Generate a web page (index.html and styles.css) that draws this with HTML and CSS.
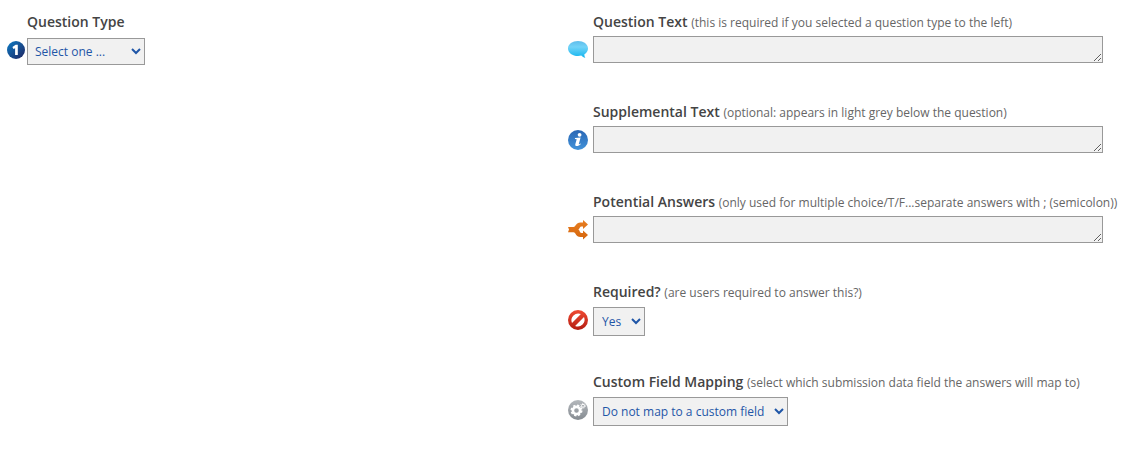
FILE: index.html
```html
<!DOCTYPE html>
<html lang="en">
<head>
  <meta charset="UTF-8" />
  <title>Custom Question</title>
  <meta name="viewport" content="width=device-width, initial-scale=1.0" />
  <link rel="stylesheet" href="styles.css">
</head>
<body>
  <form class="question-form">
    <!-- Left column: question type -->
    <div class="column">
      <div class="field type-field">
        <div class="field-label">
          <label for="questionType">Question Type</label>
        </div>
        <svg class="icon" viewBox="0 0 20 20" aria-hidden="true">
          <defs>
            <linearGradient id="navy" x1="0" y1="0" x2="1" y2="1">
              <stop offset="0" stop-color="#0c7cc6" />
              <stop offset="1" stop-color="#20235f" />
            </linearGradient>
          </defs>
          <circle cx="10" cy="10" r="10" fill="url(#navy)" />
          <path d="M6 6.600 L9.600 4.200 H12 V15.500 H9 V8 L7.200 9 Z" fill="#fff" />
        </svg>
        <select id="questionType">
          <option>Select one ...</option>
        </select>
      </div>
    </div>

    <!-- Right column: question details -->
    <div class="column">
      <div class="field">
        <div class="field-label">
          <label for="questionText">Question Text</label>
          <span class="hint">(this is required if you selected a question type to the left)</span>
        </div>
        <svg class="icon" viewBox="0 0 20 20" aria-hidden="true">
          <defs>
            <linearGradient id="sky" x1="0" y1="0" x2="0" y2="1">
              <stop offset="0" stop-color="#5fbdeb" />
              <stop offset="0.35" stop-color="#72d3f8" />
              <stop offset="1" stop-color="#0eb4ee" />
            </linearGradient>
          </defs>
          <path d="M10 1 C15.500 1 20 4.200 20 8.400 C20 10.900 18.600 12.900 16.400 14.300 C16.300 15.700 16.700 16.900 17.400 18.100 C15.700 17.700 14.300 16.800 13.300 15.600 C12.300 15.900 11.200 16 10 16 C4.500 16 0 12.600 0 8.400 C0 4.200 4.500 1 10 1 Z" fill="url(#sky)" />
        </svg>
        <textarea id="questionText" rows="1"></textarea>
      </div>

      <div class="field">
        <div class="field-label">
          <label for="supplementalText">Supplemental Text</label>
          <span class="hint">(optional: appears in light grey below the question)</span>
        </div>
        <svg class="icon" viewBox="0 0 20 20" aria-hidden="true">
          <defs>
            <linearGradient id="blue" x1="0" y1="0" x2="0" y2="1">
              <stop offset="0" stop-color="#2966b4" />
              <stop offset="1" stop-color="#4293da" />
            </linearGradient>
          </defs>
          <circle cx="10" cy="10" r="10" fill="url(#blue)" />
          <circle cx="11.600" cy="4.800" r="1.900" fill="#fff" />
          <path d="M7 8 L12.600 7.500 L10.800 14 Q10.800 14.800 12.300 13.400 L12.800 13.900 C10.800 16.300 6.800 17.200 7.300 14.300 L8.700 9.200 L6.900 8.900 Z" fill="#fff" />
        </svg>
        <textarea id="supplementalText" rows="1"></textarea>
      </div>

      <div class="field">
        <div class="field-label">
          <label for="potentialAnswers">Potential Answers</label>
          <span class="hint">(only used for multiple choice/T/F...separate answers with ; (semicolon))</span>
        </div>
        <svg class="icon" viewBox="0 0 20 20" aria-hidden="true">
          <defs>
            <linearGradient id="orange" x1="0" y1="0" x2="0" y2="1">
              <stop offset="0" stop-color="#e87f22" />
              <stop offset="1" stop-color="#d5650c" />
            </linearGradient>
          </defs>
          <path d="M0 7 H5.500 C8 7 7.500 2.500 12.500 2.500 H15 V0 L20 4.500 L15 9 V6.500 H13.500 C11.500 6.500 12 9 10.200 9.500 C12 10 11.500 13 13.500 13 H15 V10.500 L20 15 L15 19.500 V17 H12.500 C7.500 17 8 12.200 5.500 12.200 H0 L1 9.600 Z" fill="url(#orange)" />
        </svg>
        <textarea id="potentialAnswers" rows="1"></textarea>
      </div>

      <div class="field">
        <div class="field-label">
          <label for="required">Required?</label>
          <span class="hint">(are users required to answer this?)</span>
        </div>
        <svg class="icon" viewBox="0 0 20 20" aria-hidden="true">
          <defs>
            <linearGradient id="red" x1="0" y1="0" x2="0" y2="1">
              <stop offset="0" stop-color="#f04a32" />
              <stop offset="1" stop-color="#b31d12" />
            </linearGradient>
          </defs>
          <path fill="url(#red)" fill-rule="evenodd" d="M10 0 A10 10 0 1 1 10 20 A10 10 0 1 1 10 0 Z M12.900 4 A6.800 6.800 0 0 0 4 12.900 Z M16 7.100 A6.800 6.800 0 0 1 7.100 16 Z" />
        </svg>
        <select id="required" class="roomy">
          <option>Yes</option>
          <option>No</option>
        </select>
      </div>

      <div class="field">
        <div class="field-label">
          <label for="fieldMapping">Custom Field Mapping</label>
          <span class="hint">(select which submission data field the answers will map to)</span>
        </div>
        <svg class="icon" viewBox="0 0 20 20" aria-hidden="true">
          <defs>
            <linearGradient id="grey" x1="0" y1="0" x2="0" y2="1">
              <stop offset="0" stop-color="#b4b8bc" />
              <stop offset="1" stop-color="#858b91" />
            </linearGradient>
          </defs>
          <circle cx="10" cy="10" r="10" fill="url(#grey)" />
          <circle cx="8.500" cy="10.500" r="3.600" fill="none" stroke="#fff" stroke-width="2.600" />
          <circle cx="8.500" cy="10.500" r="5.200" fill="none" stroke="#fff" stroke-width="1.600" stroke-dasharray="2.200 1.884" />
          <circle cx="15" cy="5.800" r="1.500" fill="none" stroke="#fff" stroke-width="1" />
          <circle cx="15" cy="5.800" r="2.400" fill="none" stroke="#fff" stroke-width="0.900" stroke-dasharray="0.950 0.935" />
        </svg>
        <select id="fieldMapping" class="roomy">
          <option>Do not map to a custom field</option>
        </select>
      </div>
    </div>
  </form>
</body>
</html>
```

FILE: styles.css
```css
body {
  margin: 0;
  background: #fff;
  font-family: "Open Sans", "Noto Sans", sans-serif;
  font-size: 12px;
  color: #666;
}
.question-form {
  display: grid;
  grid-template-columns: 1fr 1fr;
  gap: 10px;
  padding: 12px 8px 0 7px;
}
/* Icon on the left, label above the control on the right */
.field {
  display: grid;
  grid-template-columns: 20px 1fr;
  grid-template-rows: 20px 1fr;
  column-gap: 5px;
  row-gap: 4px;
  min-height: 90px;
  align-items: start;
  justify-items: start;
}
.field-label {
  grid-column: 2;
  font-size: 14px;
  line-height: 20px;
  white-space: nowrap;
}
.field-label label {
  font-weight: 600;
  color: #444;
}
.hint {
  font-size: 12px;
}
.icon {
  width: 20px;
  height: 20px;
  margin-top: 4px;
}
select,
textarea {
  box-sizing: border-box;
  margin: 0;
  border: 1px solid #999;
  border-radius: 0;
  background-color: #f1f1f1;
  font-family: inherit;
  font-size: 12px;
  color: #1f56a7;
}
textarea {
  width: 100%;
  max-width: 510px;
  height: 27px;
  padding: 4px;
  overflow: hidden;
}
select {
  height: 27px;
  min-width: 52px;
  padding: 3px;
}
select.roomy {
  height: 29px;
  padding: 4px 6px 4px 4px;
  margin-top: 1px;
}
/* The question type badge is smaller and sits tight against its select */
.type-field {
  grid-template-columns: 18px 1fr;
  column-gap: 2px;
  row-gap: 6px;
}
.type-field .icon {
  width: 18px;
  height: 18px;
  margin-top: 3px;
}
.type-field select {
  width: 118px;
  padding-right: 4px;
}
```
